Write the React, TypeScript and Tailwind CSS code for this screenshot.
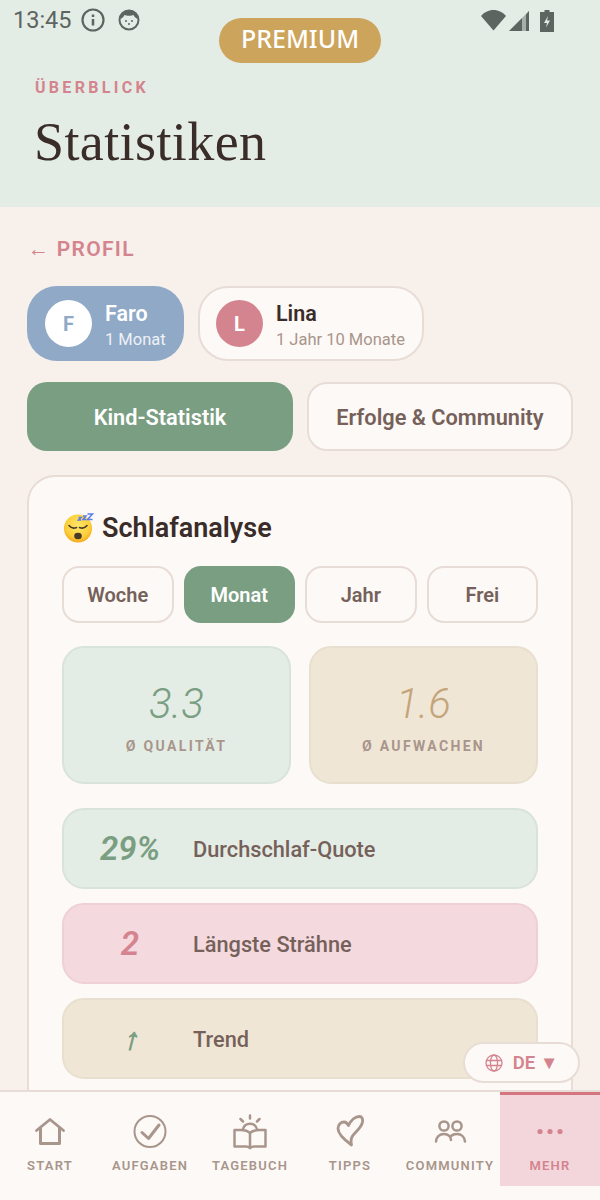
import React from "react";

const Icon = ({ children, w = 36, h = 36 }: { children: React.ReactNode; w?: number; h?: number }) => (
  <svg width={w} height={h} viewBox={`0 0 ${w} ${h}`} fill="none" stroke="currentColor" strokeWidth="2.800" strokeLinecap="round" strokeLinejoin="round">
    {children}
  </svg>
);

const SleepEmoji = () => (
  <svg width="32" height="30" viewBox="0 0 32 30" className="shrink-0">
    <defs>
      <radialGradient id="face" cx="50%" cy="40%" r="60%">
        <stop offset="0%" stopColor="#fee56a" />
        <stop offset="70%" stopColor="#fcd03c" />
        <stop offset="100%" stopColor="#f5a91c" />
      </radialGradient>
    </defs>
    <circle cx="16" cy="15.500" r="14" fill="url(#face)" />
    <path d="M7 12.500c2 2.500 5 3 7.500 2M25 12.500c-2 2.500-5 3-7.500 2" stroke="#4a3a28" strokeWidth="1.600" fill="none" strokeLinecap="round" />
    <ellipse cx="16" cy="23" rx="3.800" ry="3.200" fill="#4a3a28" />
    <path d="M16.500 4.500h2.500l-2.500 2.500h2.500M21 3h3l-3 3.500h3M25.500 1h5l-5 5.500h5" stroke="#5b7cf0" strokeWidth="1.500" fill="none" />
  </svg>
);

const navItems = [
  {
    label: "START",
    icon: (
      <Icon>
        <path d="M4.500 16.500 18 5.500l13.500 11" />
        <path d="M8.500 14v15.500h19V14" strokeWidth="3" />
      </Icon>
    ),
  },
  {
    label: "AUFGABEN",
    icon: (
      <svg width="36" height="36" viewBox="0 0 36 36" fill="none" stroke="currentColor" strokeLinecap="round" strokeLinejoin="round">
        <circle cx="18" cy="17.500" r="15.500" strokeWidth="2" />
        <path d="M10 18.500l6.500 6L27 11" strokeWidth="3" />
      </svg>
    ),
  },
  {
    label: "TAGEBUCH",
    icon: (
      <svg width="36" height="36" viewBox="0 0 36 36" fill="none" stroke="currentColor" strokeWidth="2.500" strokeLinecap="round" strokeLinejoin="round">
        <path d="M2.500 16h6c4 0 7.500 1 9.500 3 2-2 5.500-3 9.500-3h6v16.500H22c-2 0-3 .5-4 1.500-1-1-2-1.500-4-1.500H2.500z" />
        <path d="M18 19v15" />
        <path d="M11 15a7.300 7.300 0 0 1 14 0" />
        <path d="M18 1.500v3M8.500 5l2.500 2.500M27.500 5 25 7.500" />
      </svg>
    ),
  },
  {
    label: "TIPPS",
    icon: (
      <Icon>
        <path d="M19.500 31C14 27 6 21 6 14.500 6 10.500 9 8 12 8c2 0 3.500 1.500 4.500 3.500C19 6 23.500 2.500 27.500 2.500c2.500 0 3.500 2.500 3 5.500-1 6-7.500 10-10 14-1.500 2.500-2 5-1 9z" />
      </Icon>
    ),
  },
  {
    label: "COMMUNITY",
    icon: (
      <svg width="36" height="36" viewBox="0 0 36 36" fill="none" stroke="currentColor" strokeWidth="2.500" strokeLinecap="round">
        <circle cx="12" cy="12" r="4.600" />
        <circle cx="25" cy="12" r="4.600" />
        <path d="M4 27.500c0-4.500 3.500-7.500 8-7.500s7 3 7 6" />
        <path d="M19 22c1.500-1.500 3.500-2 6-2 4.500 0 7.500 3 8 7.500" />
      </svg>
    ),
  },
];

const rows = [
  { value: "29%", label: "Durchschlaf-Quote", box: "bg-[#e4ede5] border-[#d8e3da]", color: "text-[#7a9e82]", arrow: false },
  { value: "2", label: "Längste Strähne", box: "bg-[#f4d9de] border-[#eed0d6]", color: "text-[#d4848e]", arrow: false },
  { value: "↑", label: "Trend", box: "bg-[#f0e6d6] border-[#e8dfce]", color: "text-[#7a9e82]", arrow: true },
];

export default function App() {
  return (
    <div className="relative w-[600px] h-[1200px] overflow-hidden flex flex-col bg-[#f7f0eb] font-['Roboto',sans-serif] text-[#3a2c28]">
      <header className="h-[207px] shrink-0 bg-[#e4ede5] flex flex-col">
        <div className="h-[41px] flex items-center pl-[13px] pr-[46px] text-[#5c6560]">
          <span className="text-[23.500px] leading-none">13:45</span>
          <svg width="24" height="24" viewBox="0 0 24 24" className="ml-[9px] -mt-[1px]" fill="none" stroke="currentColor" strokeWidth="2.200">
            <circle cx="12" cy="12" r="10.500" />
            <path d="M12 11v6.500M12 6.500v2.500" strokeWidth="2.500" />
          </svg>
          <svg width="22" height="22" viewBox="0 0 22 22" className="ml-[13px] -mt-[1px]" fill="none">
            <circle cx="11" cy="11" r="9.500" stroke="currentColor" strokeWidth="2" />
            <path d="M2 10C3 4.500 6.500 1.500 11 1.500S19 4.500 20 10c-2-.5-3.500-2-4.500-4-2 1-7 1-9 0-1 2-2.500 3.500-4.500 4z" fill="currentColor" />
            <circle cx="8" cy="12" r="1" fill="currentColor" />
            <circle cx="14" cy="12" r="1" fill="currentColor" />
            <circle cx="11" cy="15" r="1" fill="currentColor" />
          </svg>
          <div className="ml-auto flex items-center">
            <svg width="25" height="21" viewBox="0 0 25 21"><path d="M0 6c3-3.500 7.500-6 12.500-6S22 2.500 25 6L12.500 20.500z" fill="currentColor" /></svg>
            <svg width="20" height="20" viewBox="0 0 20 20" className="ml-[3px]">
              <path d="M13 7v13H0z" fill="currentColor" />
              <path d="M20 0v20h-7V7z" fill="currentColor" opacity=".45" />
              <path d="M17 3.500V20h3V0z" fill="currentColor" />
            </svg>
            <svg width="14" height="22" viewBox="0 0 14 22" className="ml-[11px]">
              <path d="M4.500 0h5v2H14v20H0V2h4.500z" fill="currentColor" />
              <path d="M8 6 4 13h3l-1 4.500L10 10.500H7z" fill="#e4ede5" />
            </svg>
          </div>
        </div>
        <p className="mt-[38px] ml-[35px] text-[16px] leading-[18px] font-bold tracking-[3.300px] text-[#d4848e]">ÜBERBLICK</p>
        <h1 className="mt-[17px] ml-[34px] font-['Liberation_Serif',serif] text-[54px] leading-[56px] tracking-[0.400px] text-[#3a2c28]">Statistiken</h1>
      </header>

      <main className="flex-1 min-h-0 overflow-hidden px-[27px]">
        <p className="mt-[29px] ml-[1px] text-[21px] leading-[26px] font-semibold tracking-[1.300px] text-[#d4848e]">← PROFIL</p>

        <div className="mt-[24px] flex gap-[14px]">
          <div className="h-[75px] w-[157px] rounded-[30px] bg-[#8fa9c7] flex items-center pl-[18px] gap-[13px] text-white">
            <div className="w-[47px] h-[47px] rounded-full bg-white flex items-center justify-center text-[#8fa9c7] text-[20px] font-bold">F</div>
            <div className="pt-[5px]">
              <p className="text-[21.500px] leading-[26px] font-semibold">Faro</p>
              <p className="text-[16.500px] leading-[22px] mt-[2px] opacity-85">1 Monat</p>
            </div>
          </div>
          <div className="h-[75px] w-[226px] rounded-[30px] bg-[#fdf9f6] border-2 border-[#e8ddd6] flex items-center pl-[16px] gap-[13px]">
            <div className="w-[47px] h-[47px] rounded-full bg-[#d4848e] flex items-center justify-center text-white text-[20px] font-bold">L</div>
            <div className="pt-[5px]">
              <p className="text-[21.500px] leading-[26px] font-semibold text-[#3a2c28]">Lina</p>
              <p className="text-[16.500px] leading-[22px] mt-[2px] text-[#a8958c]">1 Jahr 10 Monate</p>
            </div>
          </div>
        </div>

        <div className="mt-[21px] grid grid-cols-2 gap-[14px]">
          <div className="h-[69px] pt-[4px] rounded-[20px] bg-[#7a9e82] flex items-center justify-center text-white text-[21.750px] font-semibold">Kind-Statistik</div>
          <div className="h-[69px] pt-[3px] rounded-[20px] bg-[#fdf9f6] border-2 border-[#e8ddd6] flex items-center justify-center text-[#75615a] text-[21.750px] font-semibold">Erfolge & Community</div>
        </div>

        <section className="mt-[24px] h-[700px] rounded-[28px] bg-[#fdf9f6] border-2 border-[#e8ddd6] px-[33px]">
          <div className="mt-[34px] h-[34px] flex items-center gap-[8px]">
            <SleepEmoji />
            <h2 className="text-[27px] leading-[34px] font-semibold text-[#3a2c28]">Schlafanalyse</h2>
          </div>

          <div className="mt-[21px] grid grid-cols-4 gap-[10px]">
            <div className="h-[57px] rounded-[17px] border-2 border-[#e8ddd6] flex items-center justify-center text-[20px] font-semibold text-[#75615a]">Woche</div>
            <div className="h-[57px] rounded-[17px] bg-[#7a9e82] flex items-center justify-center text-[20px] font-semibold text-white">Monat</div>
            <div className="h-[57px] rounded-[17px] border-2 border-[#e8ddd6] flex items-center justify-center text-[20px] font-semibold text-[#75615a]">Jahr</div>
            <div className="h-[57px] rounded-[17px] border-2 border-[#e8ddd6] flex items-center justify-center text-[20px] font-semibold text-[#75615a]">Frei</div>
          </div>

          <div className="mt-[23px] grid grid-cols-2 gap-[18px]">
            <div className="h-[138px] rounded-[22px] bg-[#e4ede5] border-2 border-[#d8e3da] flex flex-col items-center">
              <p className="mt-[32px] text-[42px] leading-[48px] font-[350] italic text-[#7a9e82]">3.3</p>
              <p className="mt-[9px] text-[14px] leading-[18px] font-bold tracking-[2.350px] text-[#a8958c]">Ø QUALITÄT</p>
            </div>
            <div className="h-[138px] rounded-[22px] bg-[#f0e6d6] border-2 border-[#e8dfce] flex flex-col items-center">
              <p className="mt-[32px] text-[42px] leading-[48px] font-[350] italic text-[#c4a57b]">1.6</p>
              <p className="mt-[9px] text-[14px] leading-[18px] font-bold tracking-[2.350px] text-[#a8958c]">Ø AUFWACHEN</p>
            </div>
          </div>

          <div className="mt-[24px] flex flex-col gap-[14px]">
            {rows.map((row) => (
              <div key={row.label} className={`h-[81px] rounded-[22px] border-2 flex items-center ${row.box}`}>
                <span className={`w-[129px] pl-[3px] text-center ${row.color}`}>
                  {row.arrow ? (
                    <span className="inline-block ml-[5px] -skew-x-[14deg] text-[30px] font-bold [-webkit-text-stroke:1px_#7a9e82]">{row.value}</span>
                  ) : (
                    <span className="text-[33px] font-semibold italic">{row.value}</span>
                  )}
                </span>
                <span className="pt-[4px] text-[21.750px] font-medium text-[#75615a]">{row.label}</span>
              </div>
            ))}
          </div>
        </section>
      </main>

      <nav className="h-[110px] shrink-0 relative bg-[#fdf9f6] border-t-2 border-[#e8ddd6] flex items-start">
        {navItems.map((item) => (
          <div key={item.label} className="w-[100px] h-[94px] flex flex-col items-center pt-[22px] text-[#a8958c]">
            {item.icon}
            <span className="mt-[8px] text-[13px] leading-[16px] font-semibold tracking-[1.200px]">{item.label}</span>
          </div>
        ))}
        <div className="w-[100px] h-[94px] flex flex-col items-center pt-[19px] bg-[#f2d6dc] border-t-[3px] border-[#d4757f] text-[#d4848e]">
          <svg width="36" height="36" viewBox="0 0 36 36" fill="currentColor">
            <circle cx="8" cy="17.500" r="2.600" />
            <circle cx="18" cy="17.500" r="2.600" />
            <circle cx="28" cy="17.500" r="2.600" />
          </svg>
          <span className="mt-[8px] text-[13px] leading-[16px] font-semibold tracking-[1.200px]">MEHR</span>
        </div>
      </nav>

      <div className="absolute left-[219px] top-[18px] w-[162px] h-[45px] pb-[3px] rounded-full bg-[#cca45c] flex items-center justify-center font-['Noto_Sans',sans-serif] text-[25px] font-medium text-white">PREMIUM</div>

      <div className="absolute left-[463px] top-[1042px] w-[117px] h-[41px] rounded-full bg-[#fdf9f6] border-2 border-[#e8ddd6] flex items-center justify-center gap-[10px] text-[#d4848e]">
        <svg width="18" height="18" viewBox="0 0 18 18" fill="none" stroke="currentColor" strokeWidth="1.300">
          <circle cx="9" cy="9" r="8" />
          <ellipse cx="9" cy="9" rx="3.500" ry="8" />
          <path d="M1.500 6.500h15M1.500 11.500h15" />
        </svg>
        <span className="pt-[2px] text-[18.500px] font-semibold">DE ▼</span>
      </div>
    </div>
  );
}
